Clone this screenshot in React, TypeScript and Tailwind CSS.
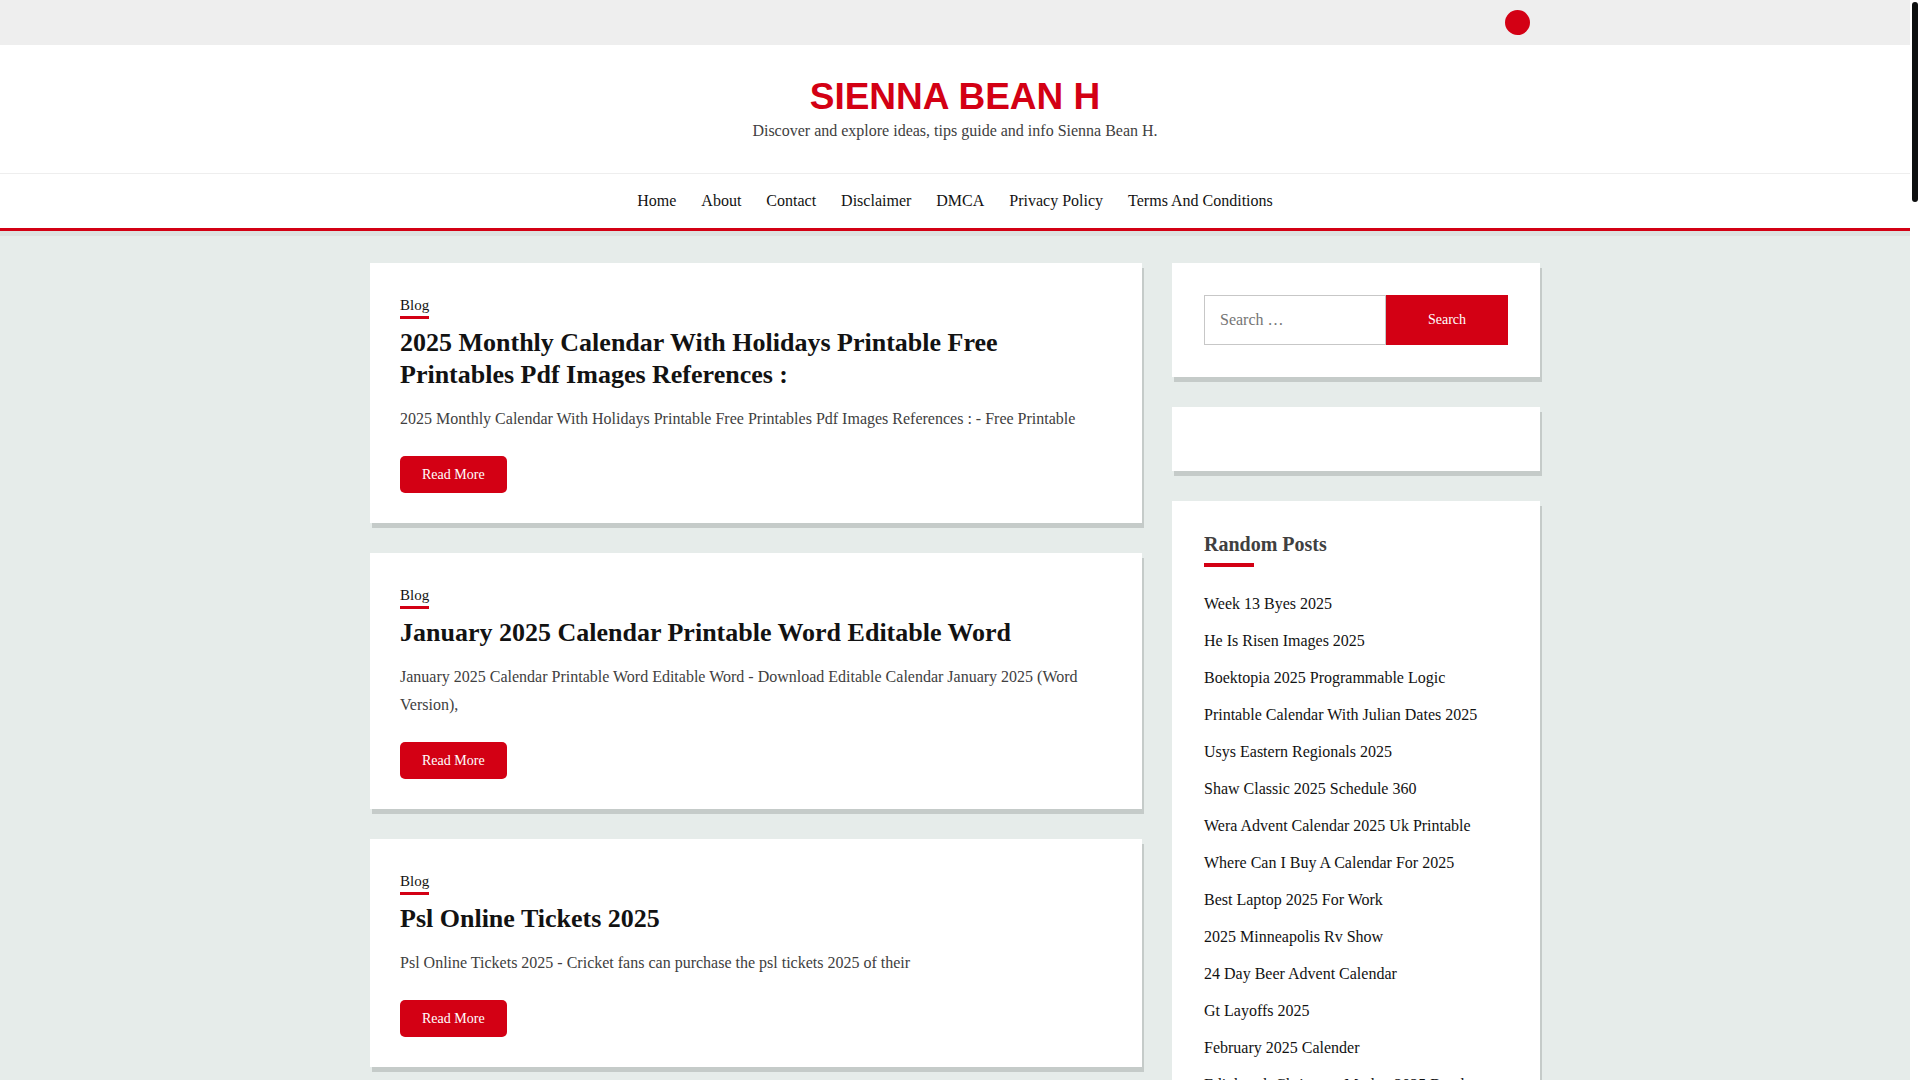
interface Post {
    title: string;
    excerpt: string;
}

const navLinks = ['Home', 'About', 'Contact', 'Disclaimer', 'DMCA', 'Privacy Policy', 'Terms And Conditions'];

const posts: Post[] = [
    {
        title: '2025 Monthly Calendar With Holidays Printable Free Printables Pdf Images References :',
        excerpt: '2025 Monthly Calendar With Holidays Printable Free Printables Pdf Images References : - Free Printable',
    },
    {
        title: 'January 2025 Calendar Printable Word Editable Word',
        excerpt: 'January 2025 Calendar Printable Word Editable Word - Download Editable Calendar January 2025 (Word Version),',
    },
    {
        title: 'Psl Online Tickets 2025',
        excerpt: 'Psl Online Tickets 2025 - Cricket fans can purchase the psl tickets 2025 of their',
    },
];

const randomPosts = [
    'Week 13 Byes 2025',
    'He Is Risen Images 2025',
    'Boektopia 2025 Programmable Logic',
    'Printable Calendar With Julian Dates 2025',
    'Usys Eastern Regionals 2025',
    'Shaw Classic 2025 Schedule 360',
    'Wera Advent Calendar 2025 Uk Printable',
    'Where Can I Buy A Calendar For 2025',
    'Best Laptop 2025 For Work',
    '2025 Minneapolis Rv Show',
    '24 Day Beer Advent Calendar',
    'Gt Layoffs 2025',
    'February 2025 Calender',
    'Edinburgh Christmas Market 2025 Breaks',
];

function Header() {
    return (
        <header className="bg-white border-b-3 border-[#d30014] shadow-[0_5px_0_rgba(0,0,0,0.04)]">
            <div className="bg-[#eeeeee]">
                <div className="max-w-[1200px] mx-auto px-[25px] py-2.5 flex justify-end">
                    <a href="#" aria-label="Social profile" className="block size-[25px] rounded-full bg-[#d30014]" />
                </div>
            </div>

            <div className="pt-8 pb-[29px] text-center border-b border-[#eeeeee]">
                <h1 className="font-['Liberation_Sans',sans-serif] text-[37px] leading-10 font-bold text-[#d30014]">
                    <a href="#">SIENNA BEAN H</a>
                </h1>
                <p className="leading-[27px]">Discover and explore ideas, tips guide and info Sienna Bean H.</p>
            </div>

            <nav className="flex flex-wrap justify-center gap-[25px] py-[13px] leading-7 text-[#121212]">
                {navLinks.map((link) => (
                    <a key={link} href="#" className="hover:text-[#d30014]">
                        {link}
                    </a>
                ))}
            </nav>
        </header>
    );
}

function PostCard({ title, excerpt }: Post) {
    return (
        <article className="bg-white p-[30px] shadow-[2px_5px_0_#c5cbc9]">
            <div className="flex">
                <a href="#" className="pt-0.5 text-[15px] leading-[21px] text-[#121212] border-b-3 border-[#d30014]">
                    Blog
                </a>
            </div>
            <h2 className="mt-2 text-[26px] leading-8 font-bold text-[#121212]">
                <a href="#">{title}</a>
            </h2>
            <p className="mt-3.5 leading-7">{excerpt}</p>
            <div className="mt-[23px] flex">
                <a href="#" className="rounded-[5px] bg-[#d30014] px-[22px] text-sm leading-[37px] text-white">
                    Read More
                </a>
            </div>
        </article>
    );
}

function Sidebar() {
    return (
        <aside className="w-[368px] shrink-0 flex flex-col gap-[30px]">
            <section className="bg-white p-8 shadow-[2px_5px_0_#c5cbc9]">
                <form role="search" className="flex" onSubmit={(e) => e.preventDefault()}>
                    <input
                        type="search"
                        aria-label="Search for:"
                        placeholder="Search …"
                        className="min-w-0 flex-1 h-[50px] border border-[#c7c7c7] px-[15px] placeholder:text-[#757575]"
                    />
                    <button type="submit" className="w-[122px] bg-[#d30014] text-sm text-white">
                        Search
                    </button>
                </form>
            </section>

            <section className="bg-white p-8 shadow-[2px_5px_0_#c5cbc9]" />

            <section className="bg-white p-8 shadow-[2px_5px_0_#c5cbc9]">
                <h2 className="text-xl leading-[22px] font-bold">Random Posts</h2>
                <div className="mt-2 h-1 w-[50px] bg-[#d30014]" />
                <ul className="mt-[18px] text-[#121212]">
                    {randomPosts.map((post) => (
                        <li key={post} className="leading-[37px]">
                            <a href="#" className="hover:text-[#d30014]">
                                {post}
                            </a>
                        </li>
                    ))}
                </ul>
            </section>
        </aside>
    );
}

export default function App() {
    return (
        <div className="flex h-screen bg-white font-['Liberation_Serif',serif] text-base text-[#404040]">
            <div className="flex-1 overflow-y-auto [scrollbar-width:none] bg-[#e6ecea]">
                <Header />
                <main className="max-w-[1200px] mx-auto px-[15px] py-8 flex items-start gap-[30px]">
                    <div className="min-w-0 flex-1 flex flex-col gap-[30px]">
                        {posts.map((post) => (
                            <PostCard key={post.title} {...post} />
                        ))}
                    </div>
                    <Sidebar />
                </main>
            </div>

            {/* Scroll rail */}
            <div className="w-2.5 shrink-0 p-0.5">
                <div className="h-[200px] w-1.5 rounded-full bg-[#0d0f10]" />
            </div>
        </div>
    );
}
